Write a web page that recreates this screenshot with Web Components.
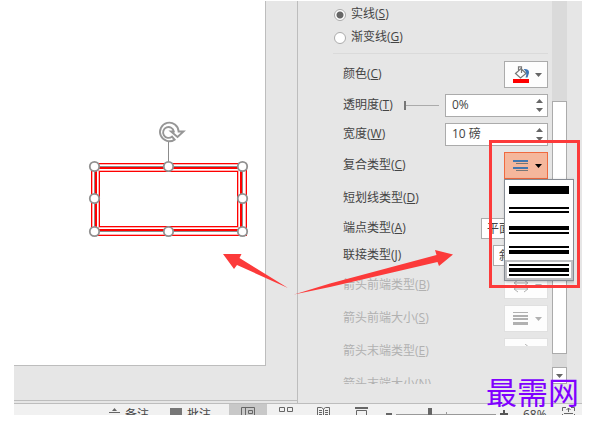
<!DOCTYPE html>
<html lang="zh-CN">
<head>
<meta charset="utf-8">
<title>设置形状格式</title>
<style>
html, body { margin: 0; min-height: 100%; background: #fff; }
body { font: 12px/16px "Open Sans", "Noto Sans CJK SC", sans-serif; color: #444; }
</style>
</head>
<body>
<office-app></office-app>
<script>
const define = (name, html, setup) => {
  customElements.define(name, class extends HTMLElement {
    constructor() {
      super();
      this.attachShadow({ mode: 'open' }).innerHTML = typeof html === 'function' ? html(this) : html;
      if (setup) setup(this, this.shadowRoot);
    }
  });
};

define('slide-canvas', `
<style>
:host { display: block; min-width: 0; background: #e6e6e6; border-bottom: 1px solid #bdbdbd; padding: 0 31px 34px 0; }
.slide { box-sizing: border-box; height: 100%; background: #fff; border: solid #bdbdbd; border-width: 0 1px 1px 0; overflow: hidden; }
svg { display: block; }
</style>
<div class="slide">
<svg width="250" height="260" viewBox="14 1 250 260" role="img" aria-label="矩形">
  <g fill="none">
    <rect x="91.5" y="163.5" width="155" height="72" stroke="#f00"/>
    <rect x="92.5" y="164.5" width="153" height="70" stroke="#ffb0b0"/>
    <rect x="95.5" y="167.5" width="146" height="63" stroke="#f00" stroke-width="3"/>
    <rect x="98.5" y="170.5" width="140" height="57" stroke="#ffb0b0"/>
    <rect x="99.5" y="171.5" width="138" height="55" stroke="#f00"/>
    <path d="M94.5 166.5H242.5V231.5H94.5ZM168.5 142V166" stroke="#8c8c8c"/>
  </g>
  <g fill="#fff" stroke="#919191" stroke-width="1.8">
    <circle cx="94.5" cy="166.5" r="4.700"/><circle cx="168.5" cy="166.5" r="4.700"/><circle cx="242.5" cy="166.5" r="4.700"/>
    <circle cx="94.5" cy="198.5" r="4.700"/><circle cx="242.5" cy="198.5" r="4.700"/>
    <circle cx="94.5" cy="231.5" r="4.700"/><circle cx="168.5" cy="231.5" r="4.700"/><circle cx="242.5" cy="231.5" r="4.700"/>
  </g>
  <path d="M174.600 139.600A9.300 9.300 0 1 1 178.600 131.500L183.500 131.500L177.500 137L171 131.500L173.800 131.500A5.400 5.400 0 1 0 172 136.600Z" fill="#fff" stroke="#969696" stroke-width="1.900"/>
</svg>
</div>`);

define('radio-line', el => `
<style>
:host { display: flex; height: 23px; align-items: center; }
label { display: flex; align-items: center; gap: 5px; }
input { appearance: none; box-sizing: border-box; width: 12px; height: 12px; margin: 0 0 0 1px; border: 1px solid #ababab; border-radius: 50%; background: #fff; }
input:checked { background: radial-gradient(circle, #666 0 3px, #fff 4px); }
span { padding-bottom: 2px; }
</style>
<label><input type="radio" name="line" ${el.hasAttribute('checked') ? 'checked' : ''}><span><slot></slot></span></label>`);

define('form-row', el => `
<style>
:host { display: flex; flex: none; justify-content: space-between; align-items: center; height: 27px; padding-left: 10px; white-space: nowrap; }
:host([size="field"]) { height: 23px; }
:host([size="select"]) { height: 21px; }
:host([disabled]) { color: #b1b1b1; }
label { display: block; padding-bottom: 2px; }
.ctl { display: flex; align-items: center; }
:host([cut]) .ctl { height: 8px; align-self: flex-start; align-items: flex-start; overflow: hidden; }
</style>
<label><slot name="label"></slot></label><div class="ctl"><slot></slot></div>`);

define('spin-field', el => `
<style>
:host { display: flex; box-sizing: border-box; width: 103px; height: 23px; border: 1px solid #ababab; background: #fff; }
input { flex: 1; min-width: 0; border: 0; padding: 0 0 1px 6px; background: none; font: inherit; color: #444; outline: 0; }
.b { display: grid; grid-template-rows: 1fr 1fr; width: 16px; padding: 2px 0; }
button { border: 0; padding: 0; background: none; display: grid; place-items: center; }
svg { display: block; }
</style>
<input type="text" aria-label="${el.getAttribute('label')}" value="${el.getAttribute('value')}">
<div class="b"><button aria-label="增加"><svg width="7" height="4"><path d="M0 4L3.500 0L7 4Z" fill="#666"/></svg></button><button aria-label="减少"><svg width="7" height="4"><path d="M0 0H7L3.500 4Z" fill="#666"/></svg></button></div>`);

define('range-line', `
<style>
:host { display: block; width: 35px; margin-right: 6px; }
input { appearance: none; display: block; width: 100%; height: 9px; margin: 0; background: linear-gradient(#ababab, #ababab) center / 100% 1px no-repeat; }
input::-webkit-slider-thumb { appearance: none; width: 2px; height: 9px; background: #777; }
</style>
<input type="range" aria-label="透明度" min="0" max="100" value="0">`);

define('pick-list', el => `
<style>
:host { display: block; }
select { appearance: none; display: block; box-sizing: border-box; width: ${el.getAttribute('width')}px; height: 21px; border: 1px solid #ababab; border-radius: 0; background: #fff; padding: 0 5px; font: inherit; color: #444; }
</style>
<select aria-label="${el.getAttribute('label')}"><option>${el.getAttribute('value')}</option></select>`);

define('icon-drop', el => `
<style>
:host { display: block; position: relative; }
button { display: flex; align-items: center; justify-content: space-between; box-sizing: border-box; width: 44px; height: 27px; padding: 0 5px 0 8px; border: 1px solid #ababab; background: #fdfdfd; color: #666; }
:host([open]) button { background: #f5b79c; border-color: #f06a3f; color: #000; }
:host([disabled]) button { border-color: #e0e0e0; color: #b1b1b1; }
svg { display: block; }
</style>
<button aria-label="${el.getAttribute('label')}" ${el.hasAttribute('disabled') ? 'disabled' : ''}><slot></slot><svg width="7" height="4"><path d="M0 0H7L3.500 4Z" fill="currentColor"/></svg></button><slot name="menu"></slot>`);

define('compound-menu', `
<style>
:host { position: absolute; top: 27px; left: 0; z-index: 2; display: block; box-sizing: border-box; width: 70px; border: 1px solid #868b93; background: #fff; box-shadow: 1px 1px 3px #0004; }
button { display: grid; align-content: center; gap: 2px; box-sizing: border-box; width: 100%; height: 20px; margin: 0; padding: 0 4px; border: 0; background: #fff; }
i { display: block; height: 2px; background: #000; }
.m { height: 4px; } .l { height: 8px; }
button[aria-checked="true"] { border: 2px solid #bfc0c3; padding: 0 2px; }
</style>
<div role="menu"><button role="menuitemradio" aria-label="单线"><i class="l"></i></button><button role="menuitemradio" aria-label="双线"><i></i><i></i></button><button role="menuitemradio" aria-label="由粗到细"><i class="m"></i><i></i></button><button role="menuitemradio" aria-label="由细到粗"><i></i><i class="m"></i></button><button role="menuitemradio" aria-label="三线" aria-checked="true"><i></i><i class="m"></i><i></i></button></div>`);

define('scroll-track', `
<style>
:host { display: grid; grid-template-rows: 100px 1fr 13px 17px; width: 15px; background: #dadada; }
.thumb, button { grid-row: 2; box-sizing: border-box; border: 1px solid #ababab; background: #fff; }
button { grid-row: 4; padding: 0; display: grid; place-items: center; }
</style>
<div class="thumb"></div><button aria-label="向下滚动"><svg width="7" height="4"><path d="M0 0H7L3.500 4Z" fill="#666"/></svg></button>`);

define('format-pane', `
<style>
:host { display: flex; gap: 4px; box-sizing: border-box; min-height: 0; padding: 0 15px 19px 35px; background: #e6e6e6; border-left: 1px solid #bdbdbd; }
.clip { flex: 1; min-height: 0; overflow: hidden; margin-right: -26px; padding-right: 26px; position: relative; z-index: 1; pointer-events: none; }
.form { display: flex; flex-direction: column; gap: 6px; height: 0; pointer-events: auto; }
.radios { flex: none; padding-top: 2px; }
hr { flex: none; width: 100%; margin: -2px 0 1px; border: 0; border-top: 1px solid #dadada; }
scroll-track { position: relative; }
svg { display: block; }
u { text-underline-offset: 1px; }
</style>
<div class="clip"><div class="form">
  <div class="radios"><radio-line checked>实线(<u>S</u>)</radio-line><radio-line>渐变线(<u>G</u>)</radio-line></div>
  <hr>
  <form-row><span slot="label">颜色(<u>C</u>)</span><icon-drop label="颜色"><svg width="18" height="18" viewBox="0 0 18 18"><path d="M2.500 7.500L8 2.500L13 7.500L7.500 12ZM5.500 5V.8H8.500V7" fill="none" stroke="#777" stroke-width="1.200"/><path d="M10.500 3Q16.500 2.500 16 7L14.500 11.500L12.500 11.500Q15 7 10.500 3Z" fill="#3f76b5"/><path d="M0 13H16V17H0Z" fill="#f00"/></svg></icon-drop></form-row>
  <form-row size="field"><span slot="label">透明度(<u>T</u>)</span><range-line></range-line><spin-field label="透明度" value="0%"></spin-field></form-row>
  <form-row size="field"><span slot="label">宽度(<u>W</u>)</span><spin-field label="宽度" value="10 磅"></spin-field></form-row>
  <form-row><span slot="label">复合类型(<u>C</u>)</span><icon-drop open label="复合类型"><svg width="16" height="12"><path d="M0 0H15V2H0ZM0 7H15V9H0Z" fill="#4478ae"/><path d="M3 3H15V4H3ZM3 10H15V11H3Z" fill="#777"/></svg><compound-menu slot="menu"></compound-menu></icon-drop></form-row>
  <form-row><span slot="label">短划线类型(<u>D</u>)</span></form-row>
  <form-row size="select"><span slot="label">端点类型(<u>A</u>)</span><pick-list width="67" label="端点类型" value="平面"></pick-list></form-row>
  <form-row size="select"><span slot="label">联接类型(<u>J</u>)</span><pick-list width="55" label="联接类型" value="斜接"></pick-list></form-row>
  <form-row disabled><span slot="label">箭头前端类型(<u>B</u>)</span><icon-drop disabled label="箭头前端类型"><svg width="17" height="14"><path d="M1 4H15M5 1L1 4L5 7M11 1L15 4L11 7M1 10H15M5 7L1 10L5 13M11 7L15 10L11 13" fill="none" stroke="#b1b1b1"/></svg></icon-drop></form-row>
  <form-row disabled><span slot="label">箭头前端大小(<u>S</u>)</span><icon-drop disabled label="箭头前端大小"><svg width="16" height="14"><path d="M0 0H15V1H0ZM0 3H15V5H0ZM0 6H15V8H0ZM0 10H15V13H0Z" fill="#b1b1b1"/></svg></icon-drop></form-row>
  <form-row disabled cut><span slot="label">箭头末端类型(<u>E</u>)</span><icon-drop disabled label="箭头末端类型"><svg width="17" height="16"><path d="M1 2.500H15M11 -1L15 2.500L11 6" fill="none" stroke="#b1b1b1"/></svg></icon-drop></form-row>
  <form-row disabled><span slot="label">箭头末端大小(<u>N</u>)</span></form-row>
</div></div>
<scroll-track></scroll-track>`);

define('status-bar', `
<style>
:host { display: flex; box-sizing: border-box; height: 12px; border-top: 1px solid #bdbdbd; background: #f1f1f1; overflow: hidden; align-items: flex-start; color: #444; }
button { display: flex; gap: 5px; height: 22px; margin: 0; padding: 3px 0 0; border: 0; background: none; font: inherit; color: inherit; flex: none; white-space: nowrap; }
.left { display: flex; flex: 1; justify-content: flex-end; gap: 21px; padding-right: 18px; }
.views { display: flex; flex: none; }
.views button { width: 38px; justify-content: center; }
.views .on { background: #c8c8c8; }
.zoom { display: flex; flex: none; width: 201px; box-sizing: border-box; padding-left: 5px; align-items: flex-start; }
svg { display: block; flex: none; }
input { appearance: none; flex: none; width: 100px; height: 12px; margin: 4px 4px 0; background: linear-gradient(#999, #999) 50px 4px / 1px 5px no-repeat, linear-gradient(#999, #999) center / 100% 1px no-repeat; }
input::-webkit-slider-thumb { appearance: none; width: 4px; height: 12px; background: #666; }
.pct { padding-left: 15px; width: 54px; box-sizing: border-box; }
</style>
<div class="left"><button><svg width="11" height="12"><path d="M3 4L5.500 1L8 4ZM0 5H11V6H0ZM3 8H8L5.500 11Z" fill="#666"/></svg>备注</button><button><svg width="12" height="12"><path d="M0 1H12V9H6L3 12V9H0Z" fill="#777"/></svg>批注</button></div>
<div class="views">
<button class="on" aria-label="普通视图"><svg width="15" height="12" fill="none" stroke="#666"><path d="M.5 12V.5H13.500V12M4.500 .5V12M7.500 3.500H11.500V6.500H7.500Z"/></svg></button>
<button aria-label="幻灯片浏览"><svg width="15" height="12" fill="none" stroke="#666"><path d="M.5 .5H5.500V4.500H.5ZM8.500 .5H13.500V4.500H8.500ZM.5 8.500H5.500V12H.5ZM8.500 8.500H13.500V12H8.500Z"/></svg></button>
<button aria-label="阅读视图"><svg width="14" height="12" fill="none" stroke="#666"><path d="M.5 .5H4.500L6.500 2L8.500 .5H12.500V11.500H.5ZM6.500 2V12M2 3.500H5M8 3.500H11M2 5.500H5M8 5.500H11M2 7.500H5M8 7.500H11"/></svg></button>
<button aria-label="幻灯片放映"><svg width="14" height="12" fill="none" stroke="#666"><path d="M0 1H13" stroke-width="2"/><path d="M1.500 3.500H11.500V10H1.500Z"/></svg></button>
</div>
<div class="zoom"><button aria-label="缩小"><svg width="6" height="12"><path d="M0 6H6V8H0Z" fill="#666"/></svg></button><input type="range" aria-label="缩放" min="0" max="100" value="33"><button aria-label="放大"><svg width="8" height="12"><path d="M3 3H5V6H8V8H5V11H3V8H0V6H3Z" fill="#555"/></svg></button><button class="pct">68%</button><button aria-label="适应窗口"><svg width="13" height="12" fill="none" stroke="#666"><path d="M4 .5H.5V4M9 .5H12.500V4M.5 7V11.500H4M12.500 7V11.500H9M6.500 1V5M4.500 3L6.500 1L8.500 3M2 6.500H11"/></svg></button></div>`);

define('markup-layer', `
<style>
:host { position: absolute; top: 0; right: 0; z-index: 3; pointer-events: none; }
svg { display: block; }
.mark { position: absolute; right: 19px; top: 375px; font: 31px/31px "Noto Sans CJK SC", sans-serif; color: #8000ff; white-space: nowrap; }
</style>
<svg width="398" height="423" viewBox="200 0 398 423" aria-hidden="true"><rect x="490.500" y="141.500" width="88" height="145" fill="none" stroke="#fc3a3a" stroke-width="3"/><path d="M223 254H241.500L239.500 258L288 288L237 265L234 269ZM294 294.500L330 283.500L436.500 255L435 250L453 254.500L439 266L437.500 262L330 287Z" fill="#fc3a3a"/></svg>
<span class="mark">最需网</span>`);

define('office-app', `
<style>
:host { position: relative; display: grid; box-sizing: border-box; height: 100vh; min-height: 400px; padding: 1px 16px 8px 14px; grid-template: minmax(0, 1fr) auto / minmax(0, 1fr) 285px; }
slide-canvas { margin-bottom: 2px; box-shadow: 0 2px #e6e6e6; }
status-bar { grid-column: 1 / -1; }
</style>
<slide-canvas></slide-canvas><format-pane></format-pane><status-bar></status-bar><markup-layer></markup-layer>`);
</script>
</body>
</html>
